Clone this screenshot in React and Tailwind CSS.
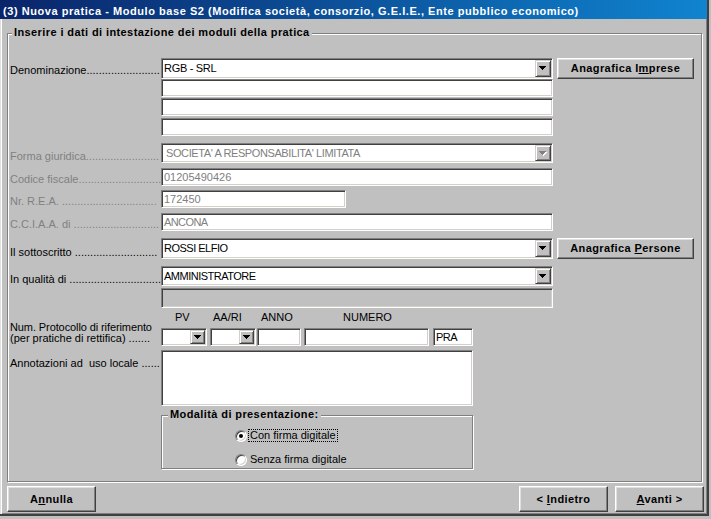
import React from "react";

const sunken =
  "border border-t-[#808080] border-l-[#808080] border-b-white border-r-white shadow-[inset_1px_1px_0_#404040,inset_-1px_-1px_0_#d4d0c8]";
const raisedBtn =
  "border border-t-white border-l-white border-b-[#404040] border-r-[#404040] shadow-[inset_-1px_-1px_0_#808080,inset_1px_1px_0_#dfdfdf] bg-[#c0c0c0]";
const dropBtn =
  "border border-t-[#d4d0c8] border-l-[#d4d0c8] border-b-[#404040] border-r-[#404040] shadow-[inset_1px_1px_0_#fff,inset_-1px_-1px_0_#808080] bg-[#c0c0c0] flex items-center justify-center shrink-0";

const dots = (n) => ".".repeat(n);

function Arrow({ disabled }) {
  return (
    <svg width="8" height="5" viewBox="0 0 8 5" shapeRendering="crispEdges">
      {disabled && (
        <g fill="#fff">
          <rect x="1" y="1" width="7" height="1" />
          <rect x="2" y="2" width="5" height="1" />
          <rect x="3" y="3" width="3" height="1" />
          <rect x="4" y="4" width="1" height="1" />
        </g>
      )}
      <g fill={disabled ? "#808080" : "#000"}>
        <rect x="0" y="0" width="7" height="1" />
        <rect x="1" y="1" width="5" height="1" />
        <rect x="2" y="2" width="3" height="1" />
        <rect x="3" y="3" width="1" height="1" />
      </g>
    </svg>
  );
}

function Label({ children, n, gray, className = "" }) {
  return (
    <div
      className={`w-[151px] shrink-0 self-end overflow-hidden whitespace-pre ${
        gray ? "text-[#808080]" : "text-black"
      } ${className}`}
    >
      {children}
      {dots(n)}
    </div>
  );
}

function Spacer() {
  return <div className="w-[151px] shrink-0" />;
}

function Btn({ children, className }) {
  return (
    <div
      className={`${raisedBtn} ${className} flex items-center justify-center font-bold tracking-[0.4px] text-black`}
    >
      {children}
    </div>
  );
}

function Radio({ checked }) {
  return (
    <div className="w-[12px] h-[12px] rounded-full border border-t-[#808080] border-l-[#808080] border-b-white border-r-white shadow-[inset_1px_1px_0_#404040,inset_-1px_-1px_0_#d4d0c8] bg-white flex items-center justify-center shrink-0">
      {checked && <div className="w-[4px] h-[4px] rounded-full bg-black" />}
    </div>
  );
}

export default function App() {
  return (
    <div className="w-[711px] h-[519px] bg-[#c0c0c0] overflow-hidden font-['Liberation_Sans',Arial,sans-serif] text-[11px] leading-[13px] text-black">
      <div className="w-[709px] h-[516px] flex flex-col border-r-2 border-b-2 border-[#404040] shadow-[inset_1px_0_0_#dfdfdf,inset_2px_0_0_#fff,inset_-1px_-1px_0_#808080]">
        {/* Title bar */}
        <div className="h-[19px] shrink-0 bg-gradient-to-r from-[#0a246a] to-[#1084d0] flex items-center pl-[3px] pt-[3px] text-white font-bold tracking-[0.55px] whitespace-nowrap">
          (3) Nuova pratica - Modulo base S2 (Modifica società, consorzio, G.E.I.E., Ente pubblico economico)
        </div>

        {/* Main group box */}
        <div className="relative mt-[14px] ml-[7px] mr-[5px] h-[449px] shrink-0 border border-[#808080] shadow-[1px_1px_0_#fff,inset_1px_1px_0_#fff] pt-[24px] pl-[2px] flex flex-col">
          <span className="absolute left-[4px] -top-[8px] px-[2px] bg-[#c0c0c0] font-bold tracking-[0.4px] whitespace-nowrap">
            Inserire i dati di intestazione dei moduli della pratica
          </span>

          {/* Denominazione */}
          <div className="flex">
            <Label n={24} className="pb-[2px]">Denominazione</Label>
            <div className={`${sunken} w-[392px] h-[21px] bg-white flex items-center`}>
              <span className="flex-1 pl-[2px] tracking-[-0.3px] whitespace-nowrap overflow-hidden">RGB - SRL</span>
              <div className={`${dropBtn} w-[16px] h-[17px] mr-[1px]`}>
                <Arrow />
              </div>
            </div>
            <Btn className="ml-[4px] w-[137px] h-[21px]">
              <span>
                Anagrafica I<span className="underline">m</span>prese
              </span>
            </Btn>
          </div>
          <div className="flex">
            <Spacer />
            <div className={`${sunken} w-[392px] h-[18px] bg-white`} />
          </div>
          <div className="flex mt-[1px]">
            <Spacer />
            <div className={`${sunken} w-[392px] h-[18px] bg-white`} />
          </div>
          <div className="flex mt-[2px]">
            <Spacer />
            <div className={`${sunken} w-[392px] h-[18px] bg-white`} />
          </div>

          {/* Forma giuridica */}
          <div className="flex mt-[7px]">
            <Label n={24} gray>Forma giuridica</Label>
            <div className={`${sunken} w-[392px] h-[20px] bg-white flex items-center`}>
              <span className="flex-1 pl-[4px] tracking-[-0.4px] whitespace-nowrap overflow-hidden text-[#808080]">
                SOCIETA' A RESPONSABILITA' LIMITATA
              </span>
              <div className={`${dropBtn} w-[16px] h-[16px] mr-[1px]`}>
                <Arrow disabled />
              </div>
            </div>
          </div>

          {/* Codice fiscale */}
          <div className="flex mt-[5px]">
            <Label n={27} gray>Codice fiscale</Label>
            <div className={`${sunken} w-[392px] h-[18px] bg-white flex items-center pl-[2px] text-[#808080]`}>
              01205490426
            </div>
          </div>

          {/* Nr REA */}
          <div className="flex mt-[4px]">
            <Label n={31} gray>{"Nr. R.E.A. "}</Label>
            <div className={`${sunken} w-[185px] h-[18px] bg-white flex items-center pl-[2px] text-[#808080]`}>
              172450
            </div>
          </div>

          {/* CCIAA */}
          <div className="flex mt-[5px]">
            <Label n={28} gray>{"C.C.I.A.A. di "}</Label>
            <div className={`${sunken} w-[392px] h-[18px] bg-white flex items-center pl-[2px] tracking-[-0.6px] text-[#808080]`}>
              ANCONA
            </div>
          </div>

          {/* Il sottoscritto */}
          <div className="flex mt-[7px]">
            <Label n={27}>{"Il sottoscritto "}</Label>
            <div className={`${sunken} w-[392px] h-[21px] bg-white flex items-center`}>
              <span className="flex-1 pl-[2px] tracking-[-0.5px] whitespace-nowrap overflow-hidden">ROSSI ELFIO</span>
              <div className={`${dropBtn} w-[16px] h-[17px] mr-[1px]`}>
                <Arrow />
              </div>
            </div>
            <Btn className="ml-[4px] w-[137px] h-[21px]">
              <span>
                Anagrafica <span className="underline">P</span>ersone
              </span>
            </Btn>
          </div>

          {/* In qualita di */}
          <div className="flex mt-[7px]">
            <Label n={30}>{"In qualità di "}</Label>
            <div className={`${sunken} w-[392px] h-[20px] bg-white flex items-center`}>
              <span className="flex-1 pl-[2px] tracking-[-0.5px] whitespace-nowrap overflow-hidden">AMMINISTRATORE</span>
              <div className={`${dropBtn} w-[16px] h-[16px] mr-[1px]`}>
                <Arrow />
              </div>
            </div>
          </div>
          <div className="flex mt-[2px]">
            <Spacer />
            <div className={`${sunken} w-[392px] h-[20px] bg-[#c0c0c0]`} />
          </div>

          {/* Protocollo */}
          <div className="flex mt-[3px]">
            <div className="w-[151px] shrink-0 self-end whitespace-pre leading-[11px] pb-[2px]">
              <div className="tracking-[-0.1px]">Num. Protocollo di riferimento</div>
              <div>{"(per pratiche di rettifica) " + dots(7)}</div>
            </div>
            <div className="flex flex-col">
              <div className="flex h-[13px] whitespace-nowrap">
                <span className="w-[52px] pl-[14px]">PV</span>
                <span className="w-[48px]">AA/RI</span>
                <span className="w-[82px]">ANNO</span>
                <span>NUMERO</span>
              </div>
              <div className="flex mt-[4px]">
                <div className={`${sunken} w-[46px] h-[18px] bg-white flex items-center justify-end`}>
                  <div className={`${dropBtn} w-[15px] h-[14px] mr-[1px]`}>
                    <Arrow />
                  </div>
                </div>
                <div className={`${sunken} ml-[3px] w-[46px] h-[18px] bg-white flex items-center justify-end`}>
                  <div className={`${dropBtn} w-[15px] h-[14px] mr-[1px]`}>
                    <Arrow />
                  </div>
                </div>
                <div className={`${sunken} ml-[1px] w-[44px] h-[18px] bg-white`} />
                <div className={`${sunken} ml-[3px] w-[125px] h-[18px] bg-white`} />
                <div className={`${sunken} ml-[4px] w-[40px] h-[18px] bg-white flex items-center pl-[2px] tracking-[-0.5px]`}>
                  PRA
                </div>
              </div>
            </div>
          </div>

          {/* Annotazioni */}
          <div className="flex mt-[4px]">
            <div className="w-[151px] shrink-0 whitespace-pre pt-[7px]">
              {"Annotazioni ad  uso locale " + dots(6)}
            </div>
            <div className={`${sunken} w-[312px] h-[56px] bg-white`} />
          </div>

          {/* Modalita */}
          <div className="flex mt-[9px]">
            <Spacer />
            <div className="relative w-[312px] h-[54px] border border-[#808080] shadow-[1px_1px_0_#fff,inset_1px_1px_0_#fff] pl-[73px] pt-[13px] flex flex-col">
              <span className="absolute left-[6px] -top-[8px] px-[2px] bg-[#c0c0c0] font-bold tracking-[0.4px] whitespace-nowrap">
                Modalità di presentazione:
              </span>
              <div className="flex items-center h-[13px]">
                <Radio checked />
                <span className="ml-[1px] px-[1px] border border-dotted border-black leading-[11px]">
                  Con firma digitale
                </span>
              </div>
              <div className="flex items-center h-[13px] mt-[11px]">
                <Radio />
                <span className="ml-[1px] px-[1px] border border-transparent leading-[11px]">
                  Senza firma digitale
                </span>
              </div>
            </div>
          </div>
        </div>

        {/* Bottom buttons */}
        <div className="mt-[4px] ml-[7px] mr-[3px] h-[26px] shrink-0 flex justify-between">
          <Btn className="w-[89px] h-[26px]">
            <span>
              A<span className="underline">n</span>nulla
            </span>
          </Btn>
          <div className="flex gap-[7px]">
            <Btn className="w-[89px] h-[26px]">
              <span>
                {"< "}
                <span className="underline">I</span>ndietro
              </span>
            </Btn>
            <Btn className="w-[89px] h-[26px]">
              <span>
                <span className="underline">A</span>vanti {">"}
              </span>
            </Btn>
          </div>
        </div>
      </div>
    </div>
  );
}
